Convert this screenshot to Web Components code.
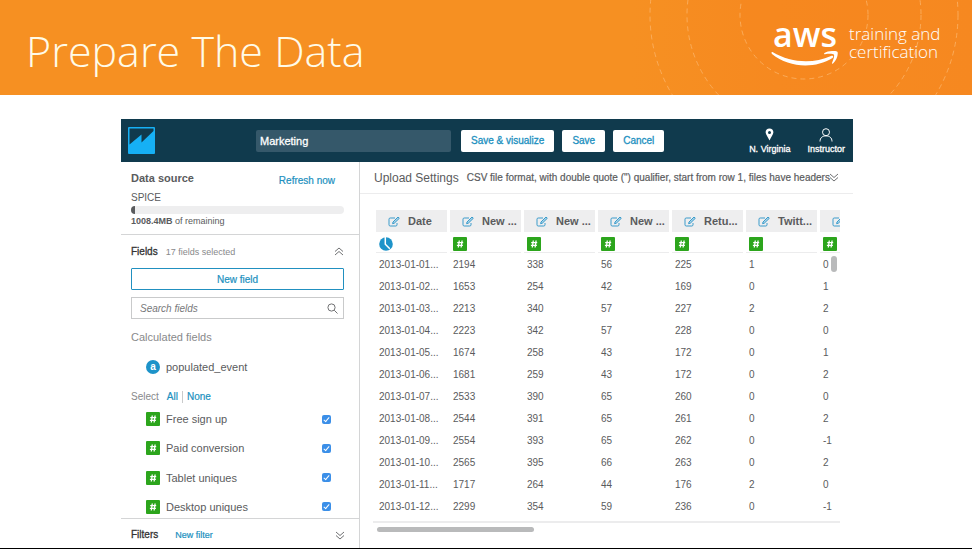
<!DOCTYPE html>
<html lang="en">
<head>
<meta charset="utf-8">
<title>Prepare The Data</title>
<style>
  body {
    margin: 0;
    background: #fff;
    font-family: "Liberation Sans", Arial, sans-serif;
    color: #5a5b5d;
  }
</style>
</head>
<body>
<slide-page>
  <slide-banner slot="banner">Prepare The Data</slide-banner>
  <data-prep></data-prep>
</slide-page>

<script>
const ICONS = {
  logo: `<svg width="27" height="27" viewBox="0 0 27 27"><rect width="27" height="27" rx="1" fill="#16b0f5"/><path d="M1.500 1.500H25.500V4L13.500 15.500V7.500L1.500 17.500Z" fill="#103a4d"/></svg>`,
  pin: `<svg width="9" height="13" viewBox="0 0 9 13"><path fill-rule="evenodd" fill="#fff" d="M4.500 0.500C2.200 0.500 .6 2.100 .6 4.300C.6 6.500 3.200 9.300 4.500 12.500C5.800 9.300 8.400 6.500 8.400 4.300C8.400 2.100 6.800 .5 4.500 .5ZM4.500 2.900A1.500 1.500 0 1 1 4.500 5.900A1.500 1.500 0 0 1 4.500 2.900Z"/></svg>`,
  person: `<svg width="14" height="14" viewBox="0 0 14 14" fill="none" stroke="#fff"><circle cx="7" cy="4.200" r="3.500"/><path d="M1 13.500C1 9.700 3.500 7.900 7 7.900S13 9.700 13 13.500"/></svg>`,
  up: `<svg width="10" height="9" viewBox="0 0 10 9" fill="none" stroke="#707173"><path d="M1 4.500L5 1L9 4.500M1 8L5 4.500L9 8"/></svg>`,
  down: `<svg width="10" height="9" viewBox="0 0 10 9" fill="none" stroke="#707173"><path d="M1 1L5 4.500L9 1M1 4.500L5 8L9 4.500"/></svg>`,
  search: `<svg width="11" height="11" viewBox="0 0 11 11" fill="none" stroke="#707173"><circle cx="4.500" cy="4.500" r="3.600"/><path d="M7.200 7.200L10.500 10.500"/></svg>`,
  edit: `<svg width="12" height="11" viewBox="0 0 12 11" fill="none" stroke="#3a9bcb"><path d="M7 2H2.200Q1 2 1 3.200V8.800Q1 10 2.200 10H7.800Q9 10 9 8.800V7"/><path d="M10 1L11.300 2.300L6.300 7.200L4.600 7.700L5 6Z" fill="#a9d4e8"/></svg>`,
  clock: `<svg width="14" height="14" viewBox="0 0 14 14"><circle cx="7" cy="7" r="6.800" fill="#1d93c9"/><path d="M6.300 0V7.200L10.800 11.700" fill="none" stroke="#fff" stroke-width="1.500"/></svg>`,
  hash: `<svg width="14" height="14" viewBox="0 0 14 14"><rect width="14" height="14" rx="1" fill="#2ca51c"/><path d="M6.300 3.500L5.300 10.500M9.100 3.500L8.100 10.500M4.200 5.700H10.200M3.900 8.400H9.900" fill="none" stroke="#fff" stroke-width="1.300"/></svg>`
}

/** Registers an element whose shadow root is cloned from the given markup. */
function define (name, html, setup) {
  const template = document.createElement('template')
  template.innerHTML = html
  customElements.define(name, class extends HTMLElement {
    constructor () {
      super()
      this.attachShadow({ mode: 'open' })
      this.shadowRoot.appendChild(template.content.cloneNode(true))
    }

    connectedCallback () {
      if (setup) setup(this, this.shadowRoot)
    }
  })
}

define('qs-icon', `
  <style>
    :host { display: inline-flex; flex: none; }
    svg { display: block; }
  </style>
  <span></span>
`, (host, root) => {
  root.querySelector('span').innerHTML = ICONS[host.getAttribute('name')]
})

define('slide-page', `
  <style>
    :host { display: flex; flex-direction: column; min-height: 100vh; box-sizing: border-box; border-bottom: 1px solid #000; }
    main { flex: 1; display: flex; padding: 24px 119px 0 121px; }
  </style>
  <slot name="banner"></slot>
  <main><slot></slot></main>
`)

define('aws-logo', `
  <style>
    :host { display: flex; align-items: flex-start; gap: 10px; color: #fff; font-family: "Open Sans", "Noto Sans", sans-serif; }
    .mark { display: flex; flex-direction: column; align-items: center; }
    .name { font-size: 34px; line-height: 27px; font-weight: 600; }
    svg { display: block; margin-top: 3px; }
    .tag { width: 92px; margin-top: 4px; font-size: 17px; line-height: 18px; font-weight: 300; }
  </style>
  <div class="mark">
    <span class="name">aws</span>
    <svg width="68" height="16" viewBox="0 0 68 16" fill="#fff">
      <path d="M1.500 1C20 12 42 13 60 5C62 4 63 6 61.500 7C44 18 18 17 1 3C0 2 .5 .5 1.500 1Z"/>
      <path d="M53.500 2C57 -.5 65.500 -.5 66.500 1C67.500 3 65.500 9.500 62 12.500C61.300 13 60.800 12.500 61 12C62.500 8.500 63.500 5 63 3.700C62 2.500 57.500 2.600 54 3.200C53 3.300 52.800 2.500 53.500 2Z"/>
    </svg>
  </div>
  <div class="tag">training and certification</div>
`)

define('slide-banner', `
  <style>
    :host {
      position: relative;
      display: flex;
      align-items: flex-start;
      justify-content: space-between;
      height: 95px;
      box-sizing: border-box;
      padding: 21px 31px 0 26px;
      overflow: hidden;
      background: linear-gradient(90deg, #f69022 65%, #f68b21 80%, #f68820);
    }
    .rings { position: absolute; top: 0; right: 0; }
    h1 { margin: 2px 0 0; font: 300 43px/56px "Open Sans", "Noto Sans", sans-serif; color: #fffbe8; }
    aws-logo { position: relative; }
  </style>
  <svg class="rings" width="332" height="95" viewBox="0 0 332 95" stroke="#fbb366" stroke-opacity=".8" stroke-dasharray="5 4">
    <circle cx="164" cy="15" r="154" fill="none"/>
    <circle cx="164" cy="15" r="117" fill="#f58220" fill-opacity=".1"/>
    <circle cx="164" cy="15" r="64" fill="#f58220" fill-opacity=".1"/>
  </svg>
  <h1><slot></slot></h1>
  <aws-logo></aws-logo>
`)

define('top-bar', `
  <style>
    :host { display: flex; align-items: center; height: 43px; padding: 0 8px 0 7px; background: #103a4d; color: #fff; }
    input {
      flex: 0 1 195px; min-width: 0; height: 22px; box-sizing: border-box; margin-left: 101px; padding: 0 4px;
      border: 0; border-radius: 2px; background: #35586a; color: #fff; font: 11px "Liberation Sans", sans-serif;
      -webkit-text-stroke: 0.3px;
    }
    .actions { display: flex; gap: 8px; margin-left: 10px; }
    button {
      height: 22px; padding: 0 10px; border: 0; border-radius: 2px; background: #fff; color: #2190c0;
      font: 10px "Liberation Sans", sans-serif; white-space: nowrap; -webkit-text-stroke: 0.3px;
    }
    nav { display: flex; gap: 17px; margin-left: auto; }
    a { display: flex; flex-direction: column; align-items: center; color: #fff; font-size: 9px; line-height: 12px; text-decoration: none; white-space: nowrap; -webkit-text-stroke: 0.3px; }
    nav qs-icon { height: 17px; align-items: center; }
  </style>
  <qs-icon name="logo"></qs-icon>
  <input type="text" value="Marketing" aria-label="Data set name">
  <div class="actions">
    <button>Save &amp; visualize</button>
    <button>Save</button>
    <button>Cancel</button>
  </div>
  <nav>
    <a href="#region"><qs-icon name="pin"></qs-icon>N. Virginia</a>
    <a href="#account"><qs-icon name="person"></qs-icon>Instructor</a>
  </nav>
`)

define('field-row', `
  <style>
    :host { display: block; }
    label { display: flex; align-items: center; height: 22px; padding: 0 13px 0 15px; font-size: 11px; }
    span { margin-left: 6px; }
    input {
      appearance: none; display: flex; justify-content: center; width: 9px; height: 9px; margin: 0 0 0 auto;
      border-radius: 2px; background: #3b8fe8;
    }
    input::after { content: ""; width: 2px; height: 5px; border: solid #fff; border-width: 0 1px 1px 0; transform: rotate(40deg); margin-top: 1px; }
  </style>
  <label><qs-icon name="hash"></qs-icon><span><slot></slot></span><input type="checkbox" checked></label>
`)

define('side-panel', `
  <style>
    :host { display: flex; flex-direction: column; flex: 0 0 239px; box-sizing: border-box; border-right: 1px solid #d4d5d6; font-size: 11px; line-height: 16px; }
    a { color: #2190c0; font-size: 10px; text-decoration: none; -webkit-text-stroke: 0.2px; }
    section { padding: 0 15px 0 10px; border-bottom: 1px solid #d4d5d6; }
    h2 { margin: 0; font-size: 11px; line-height: 16px; }
    .source { padding-top: 8px; padding-bottom: 6px; }
    .line { display: flex; justify-content: space-between; height: 22px; }
    .line a { line-height: 22px; padding-right: 9px; }
    .spice { font-size: 10px; line-height: 12px; }
    .meter { height: 8px; margin-top: 2px; border-radius: 4px; background: #eeeeef; overflow: hidden; }
    .meter i { display: block; width: 4px; height: 8px; background: #5a5b5d; }
    .left { font-size: 9px; line-height: 14px; }
    .fields { flex: 1; display: flex; flex-direction: column; }
    .head { display: flex; align-items: center; height: 33px; }
    .head h2, .filters h2 { font-size: 10px; font-weight: normal; color: #333; -webkit-text-stroke: 0.3px; }
    .head span { margin-left: 8px; font-size: 9px; color: #88898b; }
    qs-icon.end { margin-left: auto; }
    button { height: 22px; border: 1px solid #2190c0; border-radius: 1px; background: #fff; color: #2190c0; font: 10px "Liberation Sans", sans-serif; -webkit-text-stroke: 0.2px; }
    .search { display: flex; align-items: center; height: 22px; box-sizing: border-box; margin-top: 7px; padding: 0 5px 0 8px; border: 1px solid #c9cacb; }
    .search input { flex: 1; min-width: 0; padding: 0; border: 0; outline: 0; font: italic 10px "Liberation Sans", sans-serif; }
    .search input::placeholder { color: #77787a; }
    .calc { margin-top: 10px; color: #88898b; }
    .populated { display: flex; align-items: center; gap: 6px; margin-top: 14px; padding-left: 15px; }
    .populated b { width: 14px; border-radius: 7px; background: #1d93c9; color: #fff; font-size: 10px; line-height: 14px; text-align: center; }
    .select { display: flex; margin-top: 14px; font-size: 10px; color: #88898b; }
    .select a:first-of-type { margin-left: 8px; padding-right: 4px; }
    .select a + a { padding-left: 4px; border-left: 1px solid #c9cacb; line-height: 12px; margin: 2px 0; }
    .list { flex: 1; display: flex; flex-direction: column; justify-content: space-between; margin-top: 3px; }
    .filters { display: flex; align-items: center; height: 26px; padding: 3px 14px 0 10px; }
    .filters a { margin-left: 17px; font-size: 9px; }
  </style>
  <section class="source">
    <div class="line"><h2>Data source</h2><a href="#refresh">Refresh now</a></div>
    <div class="spice">SPICE</div>
    <div class="meter"><i></i></div>
    <div class="left"><b>1008.4MB</b> of remaining</div>
  </section>
  <section class="fields">
    <div class="head"><h2>Fields</h2><span>17 fields selected</span><qs-icon class="end" name="up"></qs-icon></div>
    <button>New field</button>
    <label class="search"><input type="text" placeholder="Search fields" aria-label="Search fields"><qs-icon name="search"></qs-icon></label>
    <div class="calc">Calculated fields</div>
    <div class="populated"><b>a</b><span>populated_event</span></div>
    <div class="select">Select<a href="#all">All</a><a href="#none">None</a></div>
    <div class="list">
      <field-row>Free sign up</field-row>
      <field-row>Paid conversion</field-row>
      <field-row>Tablet uniques</field-row>
      <field-row>Desktop uniques</field-row>
    </div>
  </section>
  <div class="filters"><h2>Filters</h2><a href="#filter">New filter</a><qs-icon class="end" name="down"></qs-icon></div>
`)

const COLUMNS = ['Date', 'New ...', 'New ...', 'New ...', 'Retu...', 'Twitt...', '']
const ROWS = [
  ['2013-01-01...', 2194, 338, 56, 225, 1, 0],
  ['2013-01-02...', 1653, 254, 42, 169, 0, 1],
  ['2013-01-03...', 2213, 340, 57, 227, 2, 2],
  ['2013-01-04...', 2223, 342, 57, 228, 0, 0],
  ['2013-01-05...', 1674, 258, 43, 172, 0, 1],
  ['2013-01-06...', 1681, 259, 43, 172, 0, 2],
  ['2013-01-07...', 2533, 390, 65, 260, 0, 0],
  ['2013-01-08...', 2544, 391, 65, 261, 0, 2],
  ['2013-01-09...', 2554, 393, 65, 262, 0, -1],
  ['2013-01-10...', 2565, 395, 66, 263, 0, 2],
  ['2013-01-11...', 1717, 264, 44, 176, 2, 0],
  ['2013-01-12...', 2299, 354, 59, 236, 0, -1]
]

define('data-grid', `
  <style>
    :host { display: block; position: relative; overflow: hidden; border-bottom: 2px solid #ececed; padding-bottom: 4px; }
    table { table-layout: fixed; width: 521px; border-spacing: 3px 0; font-size: 10px; }
    th, td { padding: 0 0 0 3px; text-align: left; white-space: nowrap; box-sizing: border-box; }
    th { height: 22px; padding-left: 12px; background: #eeeeef; font-size: 11px; }
    th div { display: flex; align-items: center; gap: 8px; }
    td { height: 22px; }
    .types td { height: 21px; border-bottom: 1px solid #ececed; }
    .types qs-icon { display: flex; margin-top: 3px; }
    .thumb { position: absolute; top: 46px; right: 3px; width: 6px; height: 16px; border-radius: 3px; background: #b9babb; }
  </style>
  <table>
    <thead><tr></tr></thead>
    <tbody></tbody>
  </table>
  <div class="thumb"></div>
`, (host, root) => {
  root.querySelector('thead tr').innerHTML = COLUMNS
    .map(c => `<th><div><qs-icon name="edit"></qs-icon><span>${c}</span></div></th>`).join('')
  const types = COLUMNS.map((c, i) => `<td><qs-icon name="${i ? 'hash' : 'clock'}"></qs-icon></td>`).join('')
  root.querySelector('tbody').innerHTML = `<tr class="types">${types}</tr>` +
    ROWS.map(r => `<tr>${r.map(v => `<td>${v}</td>`).join('')}</tr>`).join('')
})

define('data-preview', `
  <style>
    :host { flex: 1; min-width: 0; display: block; }
    .upload { display: flex; align-items: center; height: 31px; padding: 0 14px; border-bottom: 1px solid #ececed; white-space: nowrap; }
    h2 { margin: 0; font-size: 12px; font-weight: normal; }
    p { flex: 1; width: 0; margin: 0 0 0 8px; font-size: 10px; -webkit-text-stroke: 0.2px; }
    .grid { padding: 16px 13px 0; }
    .bar { width: 157px; height: 5px; margin: 4px 0 0 4px; border-radius: 3px; background: #b9babb; }
  </style>
  <div class="upload">
    <h2>Upload Settings</h2>
    <p>CSV file format, with double quote (") qualifier, start from row 1, files have headers</p>
    <qs-icon name="down"></qs-icon>
  </div>
  <div class="grid">
    <data-grid></data-grid>
    <div class="bar"></div>
  </div>
`)

define('data-prep', `
  <style>
    :host { flex: 1; min-width: 0; display: flex; flex-direction: column; }
    .body { flex: 1; display: flex; }
  </style>
  <top-bar></top-bar>
  <div class="body">
    <side-panel></side-panel>
    <data-preview></data-preview>
  </div>
`)
</script>
</body>
</html>
